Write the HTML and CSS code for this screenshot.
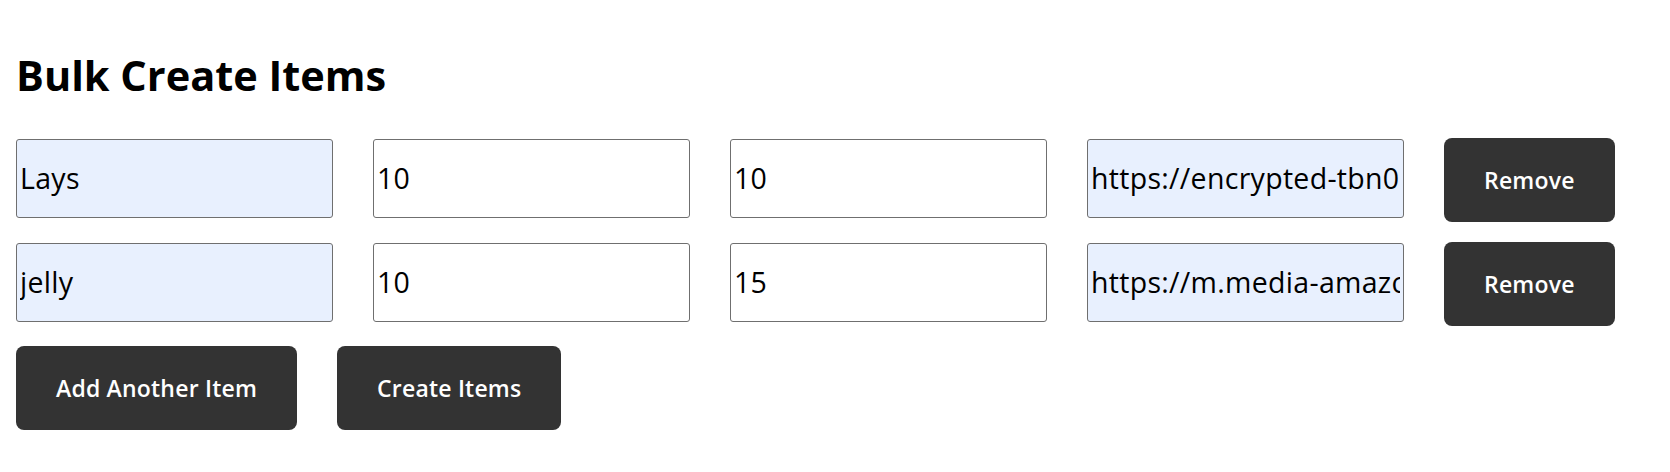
FILE: index.html
```html
<!DOCTYPE html>
<html lang="en">
<head>
<meta charset="utf-8">
<title>Bulk Create Items</title>
<link rel="stylesheet" href="styles.css">
</head>
<body>
<div class="page">
  <h1 class="title">Bulk Create Items</h1>
  <div class="item-row">
    <input class="field autofill" type="text" value="Lays">
    <input class="field" type="text" value="10">
    <input class="field" type="text" value="10">
    <input class="field autofill" type="text" value="https://encrypted-tbn0.gstatic.com/images?q=tbn">
    <button class="btn" type="button">Remove</button>
  </div>
  <div class="item-row">
    <input class="field autofill" type="text" value="jelly">
    <input class="field" type="text" value="10">
    <input class="field" type="text" value="15">
    <input class="field autofill" type="text" value="https://m.media-amazon.com/images/I/jelly.jpg">
    <button class="btn" type="button">Remove</button>
  </div>
  <div class="actions">
    <button class="btn" type="button">Add Another Item</button>
    <button class="btn" type="button">Create Items</button>
  </div>
</div>
</body>
</html>
```

FILE: styles.css
```css
html, body {
  margin: 0;
  padding: 0;
  background: #ffffff;
}

body {
  font-family: "Open Sans", "Noto Sans", sans-serif;
  color: #000000;
}

.page {
  padding: 47px 16px 0 16px;
}

.title {
  margin: 0 0 34px 0;
  font-size: 41.5px;
  font-weight: 700;
  line-height: 57px;
  letter-spacing: 0;
}

.item-row {
  display: flex;
  align-items: center;
  gap: 40px;
  margin-bottom: 20px;
}

.field {
  box-sizing: border-box;
  width: 317px;
  height: 79px;
  margin: 0 0 3px 0;
  padding: 0 3px 2px 3px;
  border: 1.5px solid #6f6f6f;
  border-radius: 3px;
  background: #ffffff;
  font-family: "Open Sans", "Noto Sans", sans-serif;
  font-size: 28.5px;
  letter-spacing: 0.3px;
  color: #000000;
  outline: none;
}

.field.autofill {
  background: #e8f0fe;
}

.actions {
  display: flex;
  gap: 40px;
}

.btn {
  box-sizing: border-box;
  height: 84px;
  margin: 0;
  padding: 0 40px;
  border: none;
  border-radius: 8px;
  background: #333333;
  color: #ffffff;
  font-family: "Open Sans", "Noto Sans", sans-serif;
  font-size: 23px;
  font-weight: 600;
  letter-spacing: 0.2px;
  cursor: pointer;
}
```
